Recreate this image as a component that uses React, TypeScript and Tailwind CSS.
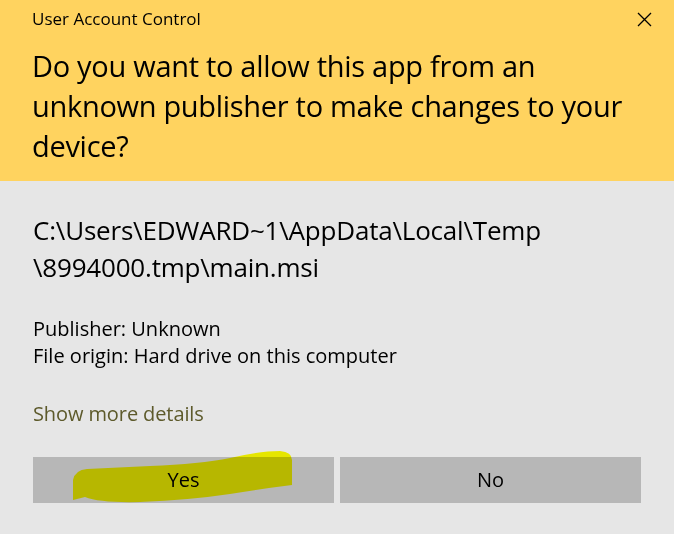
const Highlight = () => (
    <svg className="pointer-events-none absolute left-0 top-0 mix-blend-multiply" width="674" height="534" viewBox="0 0 674 534">
        <path
            d="M73,500 L73,480 Q75,470 87,469 L150,466 Q200,464 230,458 Q260,451 280,451 Q292,452 292,460 L292,485 Q260,489 230,494 Q190,500 140,502 Q100,503 85,497 Z"
            fill="#ffff00"
        />
    </svg>
);

export default function App() {
    return (
        <div className="relative h-[534px] w-[674px] overflow-hidden bg-[#e6e6e6] font-['Open_Sans',sans-serif] text-black">
            <div className="bg-[#ffd35f] pb-[15px] pl-[32px] pr-[22px] pt-[8px]">
                <div className="flex items-center justify-between">
                    <span className="text-[17px] leading-[22px]">User Account Control</span>
                    <svg width="15" height="15" viewBox="0 0 15 15">
                        <path d="M1 1 L14 14 M14 1 L1 14" stroke="#000" strokeWidth="1.3" fill="none" />
                    </svg>
                </div>
                <h1 className="mt-[16px] text-[29px] leading-[40px] tracking-[-0.3px]">
                    Do you want to allow this app from an
                    <br />
                    unknown publisher to make changes to your
                    <br />
                    device?
                </h1>
            </div>

            <div className="px-[33px]">
                <p className="mt-[31px] text-[26px] leading-[37px] tracking-[-0.2px]">
                    C:\Users\EDWARD~1\AppData\Local\Temp
                    <br />
                    \8994000.tmp\main.msi
                </p>

                <div className="mt-[29px] text-[20px] leading-[27px]">
                    <p>Publisher: Unknown</p>
                    <p>File origin: Hard drive on this computer</p>
                </div>

                <p className="mt-[31px] text-[20px] leading-[27px] tracking-[-0.1px] text-[#5d5a2b]">Show more details</p>

                <div className="mt-[30px] flex gap-[6px]">
                    <button className="h-[46px] w-[301px] bg-[#b7b7b7] text-[20px]">Yes</button>
                    <button className="h-[46px] w-[301px] bg-[#b7b7b7] text-[20px]">No</button>
                </div>
            </div>

            <Highlight />
        </div>
    );
}
